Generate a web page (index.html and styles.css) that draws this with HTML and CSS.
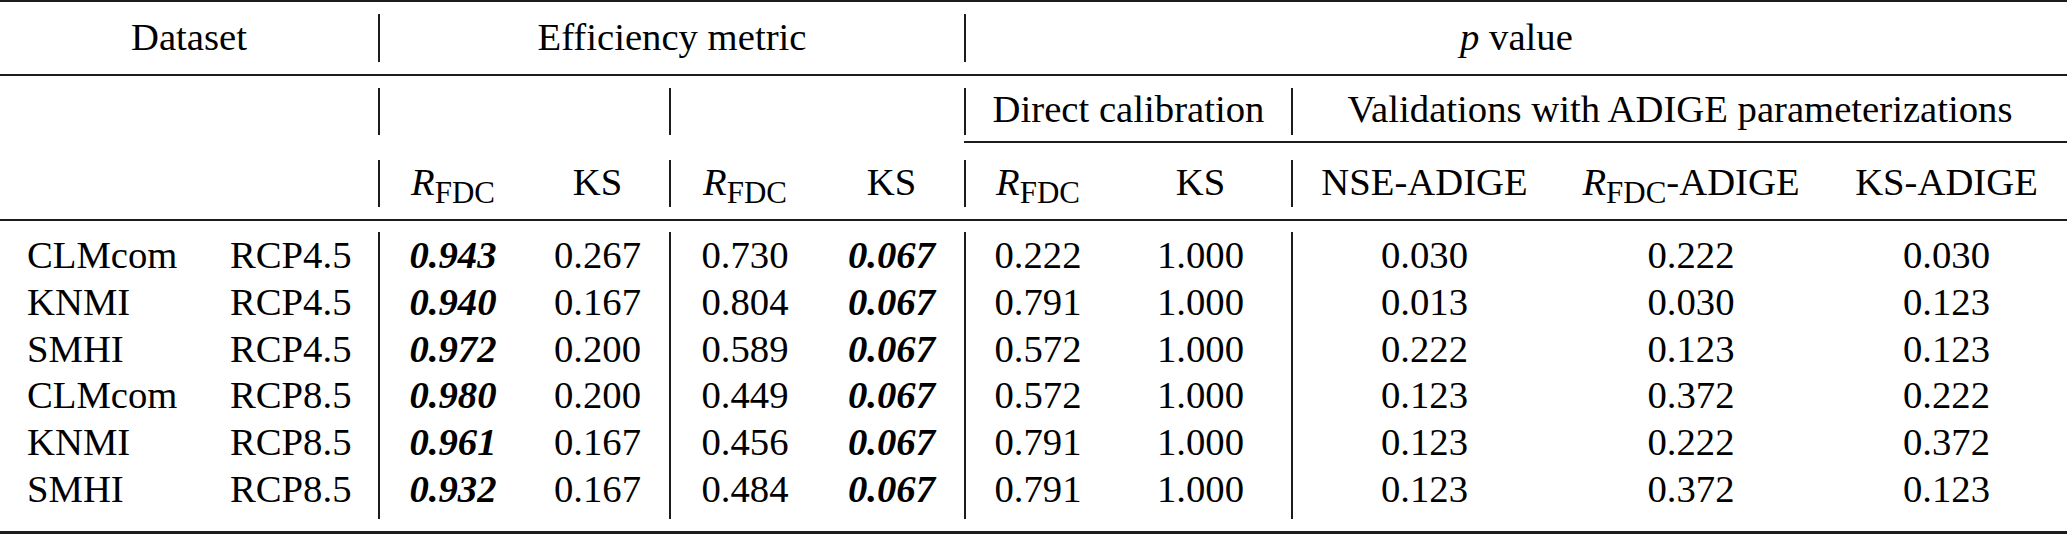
FILE: index.html
```html
<!DOCTYPE html>
<html lang="en">
<head>
<meta charset="utf-8">
<title>Efficiency metrics and p values</title>
<link rel="stylesheet" href="styles.css">
</head>
<body>
<table class="tbl">
  <colgroup>
    <col class="w1"><col class="w2"><col class="w3"><col class="w4"><col class="w5"><col class="w6"><col class="w7"><col class="w8"><col class="w9"><col class="w10"><col class="w11">
  </colgroup>
  <tbody>
    <tr class="sp sp-top"><td colspan="11"></td></tr>
    <tr class="h h1">
      <td colspan="2">Dataset</td>
      <td colspan="4" class="v">Efficiency metric</td>
      <td colspan="5" class="v"><i>p</i> value</td>
    </tr>
    <tr class="sp sp-mid1"><td colspan="11" class="rule"></td></tr>
    <tr class="sp sp-a"><td colspan="11"></td></tr>
    <tr class="h h2">
      <td colspan="2"></td>
      <td colspan="2" class="v"></td>
      <td colspan="2" class="v"></td>
      <td colspan="2" class="v">Direct calibration</td>
      <td colspan="3" class="v">Validations with ADIGE parameterizations</td>
    </tr>
    <tr class="sp sp-cmid"><td colspan="6" class="norule"></td><td colspan="5" class="rule"></td></tr>
    <tr class="sp sp-b"><td colspan="11"></td></tr>
    <tr class="h h3">
      <td colspan="2"></td>
      <td class="v"><i>R</i><sub>FDC</sub></td>
      <td>KS</td>
      <td class="v"><i>R</i><sub>FDC</sub></td>
      <td>KS</td>
      <td class="v"><i>R</i><sub>FDC</sub></td>
      <td>KS</td>
      <td class="v">NSE-ADIGE</td>
      <td><i>R</i><sub>FDC</sub>-ADIGE</td>
      <td>KS-ADIGE</td>
    </tr>
    <tr class="sp sp-mid2"><td colspan="11" class="rule"></td></tr>
    <tr class="sp sp-c"><td colspan="11"></td></tr>
    <tr class="d">
      <td class="name">CLMcom</td><td class="rcp">RCP4.5</td>
      <td class="v"><b><i>0.943</i></b></td><td>0.267</td>
      <td class="v">0.730</td><td><b><i>0.067</i></b></td>
      <td class="v">0.222</td><td>1.000</td>
      <td class="v">0.030</td><td>0.222</td><td>0.030</td>
    </tr>
    <tr class="d">
      <td class="name">KNMI</td><td class="rcp">RCP4.5</td>
      <td class="v"><b><i>0.940</i></b></td><td>0.167</td>
      <td class="v">0.804</td><td><b><i>0.067</i></b></td>
      <td class="v">0.791</td><td>1.000</td>
      <td class="v">0.013</td><td>0.030</td><td>0.123</td>
    </tr>
    <tr class="d">
      <td class="name">SMHI</td><td class="rcp">RCP4.5</td>
      <td class="v"><b><i>0.972</i></b></td><td>0.200</td>
      <td class="v">0.589</td><td><b><i>0.067</i></b></td>
      <td class="v">0.572</td><td>1.000</td>
      <td class="v">0.222</td><td>0.123</td><td>0.123</td>
    </tr>
    <tr class="d">
      <td class="name">CLMcom</td><td class="rcp">RCP8.5</td>
      <td class="v"><b><i>0.980</i></b></td><td>0.200</td>
      <td class="v">0.449</td><td><b><i>0.067</i></b></td>
      <td class="v">0.572</td><td>1.000</td>
      <td class="v">0.123</td><td>0.372</td><td>0.222</td>
    </tr>
    <tr class="d">
      <td class="name">KNMI</td><td class="rcp">RCP8.5</td>
      <td class="v"><b><i>0.961</i></b></td><td>0.167</td>
      <td class="v">0.456</td><td><b><i>0.067</i></b></td>
      <td class="v">0.791</td><td>1.000</td>
      <td class="v">0.123</td><td>0.222</td><td>0.372</td>
    </tr>
    <tr class="d d-last">
      <td class="name">SMHI</td><td class="rcp">RCP8.5</td>
      <td class="v"><b><i>0.932</i></b></td><td>0.167</td>
      <td class="v">0.484</td><td><b><i>0.067</i></b></td>
      <td class="v">0.791</td><td>1.000</td>
      <td class="v">0.123</td><td>0.372</td><td>0.123</td>
    </tr>
    <tr class="sp sp-bot"><td colspan="11"></td></tr>
  </tbody>
</table>
</body>
</html>
```

FILE: styles.css
```css
html, body {
  margin: 0;
  padding: 0;
  background: #ffffff;
  overflow: hidden;
}

.tbl {
  width: 2067px;
  table-layout: fixed;
  border-collapse: separate;
  border-spacing: 0;
  font-family: "Liberation Serif", "Times New Roman", serif;
  font-size: 38.7px;
  color: #000000;
}

.w1 { width: 204px; }
.w2 { width: 174px; }
.w3 { width: 148px; }
.w4 { width: 143px; }
.w5 { width: 150px; }
.w6 { width: 145px; }
.w7 { width: 146px; }
.w8 { width: 181px; }
.w9 { width: 265px; }
.w10 { width: 270px; }
.w11 { width: 241px; }

.tbl td {
  padding: 0;
  text-align: center;
  vertical-align: top;
  white-space: nowrap;
}

/* spacer rows */
.sp td {
  font-size: 0;
  line-height: 0;
}
.sp-top { height: 14px; }
.sp-top td { border-top: 2px solid #1c1c1c; }
.sp-mid1 { height: 14px; }
.sp-a { height: 12px; }
.sp-cmid { height: 8px; }
.sp-b { height: 17px; }
.sp-mid2 { height: 14px; }
.sp-c { height: 11px; }
.sp-bot { height: 15px; }
.sp-bot td { border-bottom: 3px solid #1c1c1c; }

.rule { border-bottom: 2px solid #1c1c1c; }
.norule { border-bottom: 2px solid transparent; }

/* header rows */
.h1 td { line-height: 46px; padding-bottom: 2px; }
.h2 td { line-height: 43px; height: 43px; padding-bottom: 4px; }
.h3 td { line-height: 45px; padding-bottom: 2px; }

/* vertical rules */
.v { border-left: 2px solid #1c1c1c; }

/* data rows */
.d td { line-height: 46.8px; }
.d-last td { padding-bottom: 6px; }
.d .name { text-align: left; padding-left: 27px; }
.d .rcp { text-align: left; padding-left: 26px; }

sub {
  font-size: 0.8em;
  line-height: 0;
  vertical-align: -0.26em;
}

b i, i b { font-weight: bold; font-style: italic; }
```
